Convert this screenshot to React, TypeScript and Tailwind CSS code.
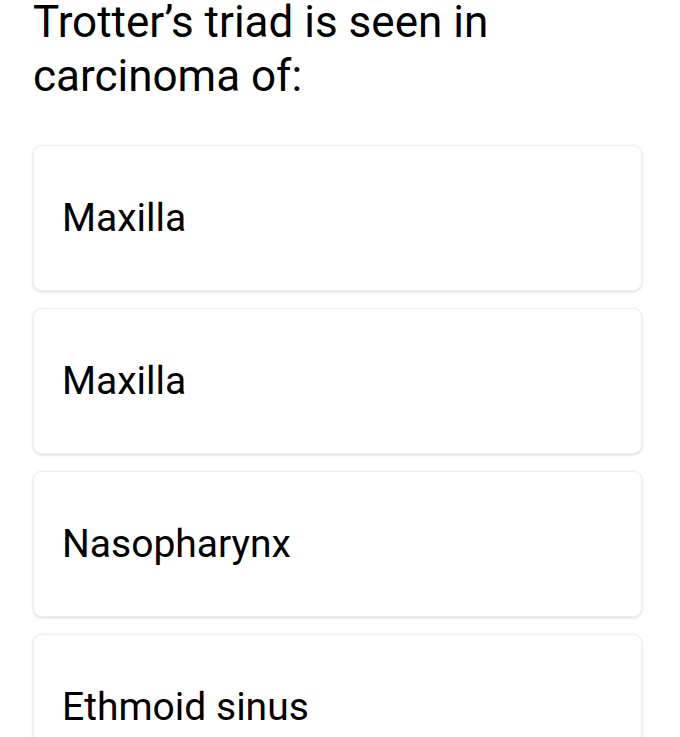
const OPTIONS = ['Maxilla', 'Maxilla', 'Nasopharynx', 'Ethmoid sinus'];

export default function App() {
  return (
    <div className="h-[737px] overflow-hidden bg-white pl-[33px] pr-[38px] font-['Roboto',sans-serif] text-black">
      <h1 className="text-[44px] font-normal">
        <span className="block leading-[44px]">Trotter’s triad is seen in</span>
        <span className="mt-[10px] block leading-[44px]">carcinoma of:</span>
      </h1>

      <div className="mt-[47px] flex flex-col gap-[17px]">
        {OPTIONS.map((opt, i) => (
          <div
            key={i}
            className="flex h-[146px] shrink-0 items-center rounded-[9px] border border-[#f0f0f0] bg-white px-[28px] shadow-[0_1px_3px_rgba(0,0,0,0.16)]"
          >
            <span className="text-[39px] leading-normal">{opt}</span>
          </div>
        ))}
      </div>
    </div>
  );
}
